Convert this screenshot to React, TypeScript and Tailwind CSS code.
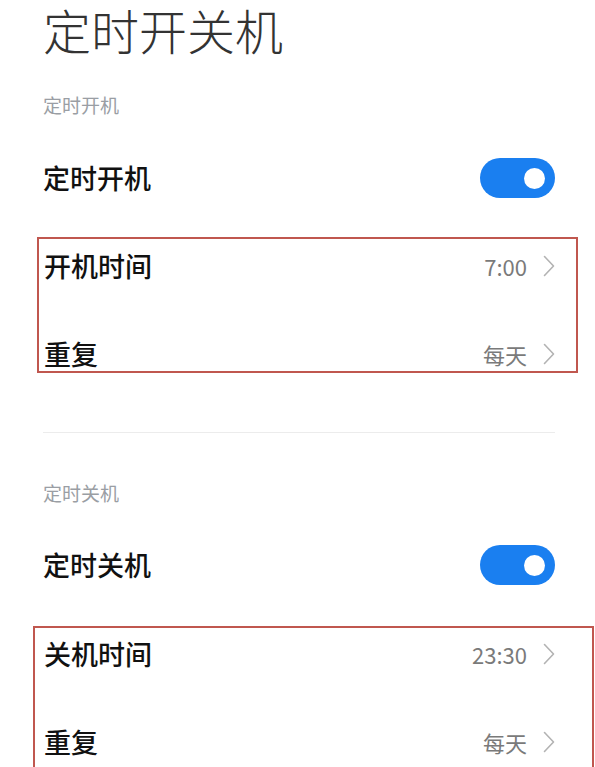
const cjk = { fontFamily: '"Noto Sans CJK SC", "Noto Sans", sans-serif' };

function Chevron() {
  return (
    <svg width="12" height="22" viewBox="0 0 12 22" fill="none" className="shrink-0">
      <polyline points="1.5,1.5 10.5,11 1.5,20.5" stroke="#b3b3b3" strokeWidth="1.6" strokeLinecap="round" strokeLinejoin="round" />
    </svg>
  );
}

function Toggle() {
  return (
    <div className="w-[75px] h-[40px] rounded-full bg-[#1a7ff0] flex items-center justify-end pr-[10px]">
      <div className="w-[21px] h-[21px] rounded-full bg-white" />
    </div>
  );
}

function ValueRow({ label, value }: { label: string; value: string }) {
  return (
    <div className="h-[34px] flex items-center justify-between">
      <span className="text-[27px] font-medium text-[#111]">{label}</span>
      <div className="flex items-center gap-[16px]">
        <span className="text-[22px] text-[#7a7a7a]">{value}</span>
        <Chevron />
      </div>
    </div>
  );
}

function Section({
  sub,
  label,
  timeLabel,
  time,
  rowClass,
  boxClass,
}: {
  sub: string;
  label: string;
  timeLabel: string;
  time: string;
  rowClass: string;
  boxClass: string;
}) {
  return (
    <>
      <div className="h-[40px] flex items-center text-[19px] text-[#9a9ea4]">{sub}</div>
      <div className={rowClass}>
        <span className="text-[27px] font-medium text-[#111]">{label}</span>
        <Toggle />
      </div>
      <div className={boxClass}>
        <ValueRow label={timeLabel} value={time} />
        <ValueRow label="重复" value="每天" />
      </div>
    </>
  );
}

export default function App() {
  return (
    <div className="w-[595px] h-[767px] overflow-hidden bg-white pl-[43px] pr-[40px]" style={cjk}>
      <h1 className="h-[58px] text-[48px] leading-[58px] font-light text-[#333]">定时开关机</h1>

      <div className="mt-[27px]">
        <Section
          sub="定时开机"
          label="定时开机"
          timeLabel="开机时间"
          time="7:00"
          rowClass="mt-[9px] h-[88px] flex items-center justify-between"
          boxClass="mt-[15px] -ml-[6px] -mr-[23px] border-2 border-[#c0574f] pl-[5px] pr-[21px] pt-[10px] flex flex-col gap-[54px]"
        />
      </div>

      <div className="mt-[59px] h-px bg-[#ececec]" />

      <div className="mt-[40px]">
        <Section
          sub="定时关机"
          label="定时关机"
          timeLabel="关机时间"
          time="23:30"
          rowClass="mt-[8px] h-[88px] flex items-center justify-between"
          boxClass="mt-[17px] -ml-[10px] -mr-[39px] border-2 border-[#c0574f] pl-[9px] pr-[37px] pt-[9px] pb-[20px] flex flex-col gap-[54px]"
        />
      </div>
    </div>
  );
}
